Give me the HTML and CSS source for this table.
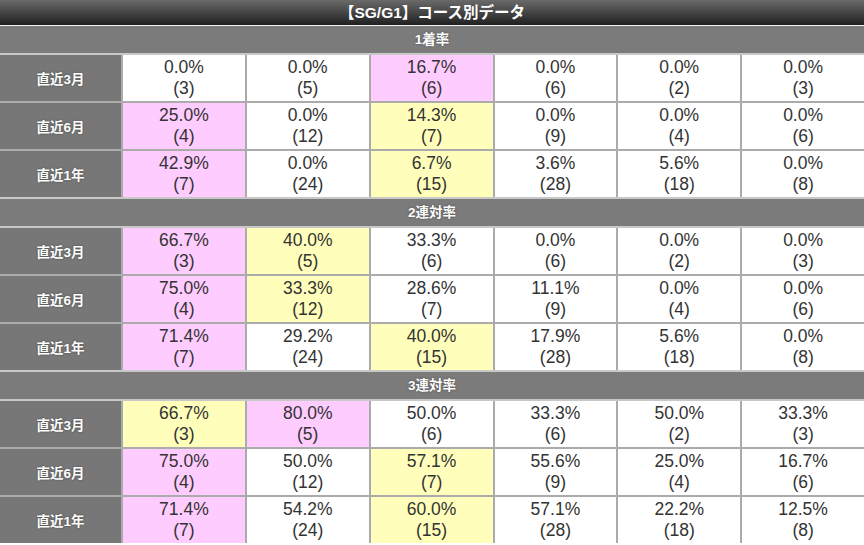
FILE: index.html
```html
<!DOCTYPE html>
<html lang="ja">
<head>
<meta charset="utf-8">
<link rel="stylesheet" href="styles.css">
<title>コース別データ</title>
</head>
<body>
<div class="title">【SG/G1】コース別データ</div>
<div class="board">
  <div class="sec">1着率</div>
  <div class="grid">
    <div class="lbl">直近3月</div>
    <div class="c">0.0%<br>(3)</div><div class="c">0.0%<br>(5)</div><div class="c pk">16.7%<br>(6)</div><div class="c">0.0%<br>(6)</div><div class="c">0.0%<br>(2)</div><div class="c">0.0%<br>(3)</div>
    <div class="lbl">直近6月</div>
    <div class="c pk">25.0%<br>(4)</div><div class="c">0.0%<br>(12)</div><div class="c yl">14.3%<br>(7)</div><div class="c">0.0%<br>(9)</div><div class="c">0.0%<br>(4)</div><div class="c">0.0%<br>(6)</div>
    <div class="lbl">直近1年</div>
    <div class="c pk">42.9%<br>(7)</div><div class="c">0.0%<br>(24)</div><div class="c yl">6.7%<br>(15)</div><div class="c">3.6%<br>(28)</div><div class="c">5.6%<br>(18)</div><div class="c">0.0%<br>(8)</div>
  </div>
  <div class="sec">2連対率</div>
  <div class="grid">
    <div class="lbl">直近3月</div>
    <div class="c pk">66.7%<br>(3)</div><div class="c yl">40.0%<br>(5)</div><div class="c">33.3%<br>(6)</div><div class="c">0.0%<br>(6)</div><div class="c">0.0%<br>(2)</div><div class="c">0.0%<br>(3)</div>
    <div class="lbl">直近6月</div>
    <div class="c pk">75.0%<br>(4)</div><div class="c yl">33.3%<br>(12)</div><div class="c">28.6%<br>(7)</div><div class="c">11.1%<br>(9)</div><div class="c">0.0%<br>(4)</div><div class="c">0.0%<br>(6)</div>
    <div class="lbl">直近1年</div>
    <div class="c pk">71.4%<br>(7)</div><div class="c">29.2%<br>(24)</div><div class="c yl">40.0%<br>(15)</div><div class="c">17.9%<br>(28)</div><div class="c">5.6%<br>(18)</div><div class="c">0.0%<br>(8)</div>
  </div>
  <div class="sec">3連対率</div>
  <div class="grid">
    <div class="lbl">直近3月</div>
    <div class="c yl">66.7%<br>(3)</div><div class="c pk">80.0%<br>(5)</div><div class="c">50.0%<br>(6)</div><div class="c">33.3%<br>(6)</div><div class="c">50.0%<br>(2)</div><div class="c">33.3%<br>(3)</div>
    <div class="lbl">直近6月</div>
    <div class="c pk">75.0%<br>(4)</div><div class="c">50.0%<br>(12)</div><div class="c yl">57.1%<br>(7)</div><div class="c">55.6%<br>(9)</div><div class="c">25.0%<br>(4)</div><div class="c">16.7%<br>(6)</div>
    <div class="lbl">直近1年</div>
    <div class="c pk">71.4%<br>(7)</div><div class="c">54.2%<br>(24)</div><div class="c yl">60.0%<br>(15)</div><div class="c">57.1%<br>(28)</div><div class="c">22.2%<br>(18)</div><div class="c">12.5%<br>(8)</div>
  </div>
</div>
</body>
</html>
```
FILE: styles.css
```css
html, body {
  margin: 0;
  padding: 0;
  background: #fff;
}
body {
  width: 864px;
  font-family: "Liberation Sans", "Noto Sans CJK JP", sans-serif;
}
.title {
  height: 25px;
  line-height: 25px;
  border-bottom: 1px solid #f4f4f4;
  background: linear-gradient(#6a6a6a, #202020);
  color: #fff;
  text-align: center;
  font-family: "Liberation Sans", "Noto Sans CJK JP", sans-serif;
  font-weight: bold;
  font-size: 15.5px;
}
.board {
  display: flex;
  flex-direction: column;
  gap: 2px;
  background: #c8c8c8;
}
.sec {
  height: 27px;
  line-height: 27px;
  background: #7b7b7b;
  color: #fff;
  text-align: center;
  font-family: "Liberation Sans", "Noto Sans CJK JP", sans-serif;
  font-weight: bold;
  font-size: 13.5px;
  text-shadow: 0 0 2px #444;
}
.grid {
  display: grid;
  grid-template-columns: 121px repeat(6, 1fr);
  grid-auto-rows: 46px;
  gap: 2px;
  background: #ababab;
}
.lbl {
  background: #777;
  color: #fff;
  display: flex;
  align-items: center;
  justify-content: center;
  font-family: "Liberation Sans", "Noto Sans CJK JP", sans-serif;
  font-weight: bold;
  font-size: 13.5px;
  text-shadow: 0 0 2px #444;
}
.c {
  background: #fff;
  color: #333;
  text-align: center;
  font-size: 17.5px;
  line-height: 21px;
  padding-top: 2px;
  box-sizing: border-box;
}
.pk {
  background: #ffccff;
}
.yl {
  background: #ffffbb;
}
```
